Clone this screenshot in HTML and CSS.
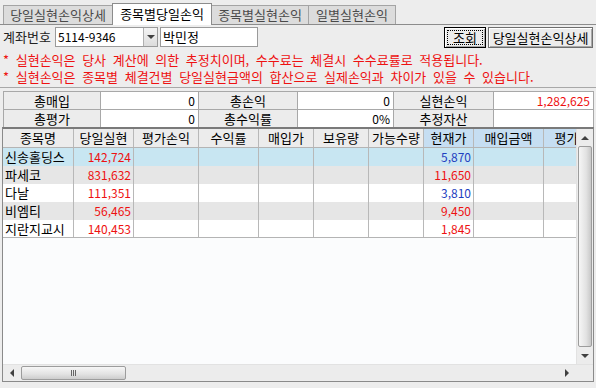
FILE: index.html
```html
<!DOCTYPE html>
<html lang="ko">
<head>
    <meta charset="UTF-8">
    <meta name="viewport" content="width=device-width, initial-scale=1.0">
    <title>종목별당일손익</title>
    <link rel="stylesheet" href="styles.css">
</head>
<body>
    <div class="tabs">
        <div class="tab tab-1">당일실현손익상세</div>
        <div class="tab tab-2 active">종목별당일손익</div>
        <div class="tab tab-3">종목별실현손익</div>
        <div class="tab tab-4">일별실현손익</div>
    </div>

    <div class="toolbar">
        <span class="label">계좌번호</span>
        <div class="combo">
            <span class="combo-text">5114-9346</span>
            <span class="combo-btn"><i class="arrow-down"></i></span>
        </div>
        <div class="field">박민정</div>
        <div class="buttons">
            <button class="btn btn-query focus">조회</button>
            <button class="btn btn-detail">당일실현손익상세</button>
        </div>
    </div>

    <div class="notes">
        <p>* 실현손익은 당사 계산에 의한 추정치이며, 수수료는 체결시 수수료률로 적용됩니다.</p>
        <p>* 실현손익은 종목별 체결건별 당일실현금액의 합산으로 실제손익과 차이가 있을 수 있습니다.</p>
    </div>

    <div class="divider"></div>

    <div class="summary">
        <div class="s-label">총매입</div>
        <div class="s-value">0</div>
        <div class="s-label">총손익</div>
        <div class="s-value">0</div>
        <div class="s-label">실현손익</div>
        <div class="s-value red">1,282,625</div>
        <div class="s-label">총평가</div>
        <div class="s-value">0</div>
        <div class="s-label">총수익률</div>
        <div class="s-value">0%</div>
        <div class="s-label">추정자산</div>
        <div class="s-value"></div>
    </div>

    <div class="grid">
        <div class="grid-main">
            <div class="grid-view">
                <div class="row head">
                    <div class="c c1">종목명</div>
                    <div class="c c2">당일실현</div>
                    <div class="c c3">평가손익</div>
                    <div class="c c4">수익률</div>
                    <div class="c c5">매입가</div>
                    <div class="c c6">보유량</div>
                    <div class="c c7">가능수량</div>
                    <div class="c c8 blue-head">현재가</div>
                    <div class="c c9 blue-head">매입금액</div>
                    <div class="c c10 blue-head">평가금액</div>
                </div>
                <div class="row selected">
                    <div class="c c1 name">신송홀딩스</div>
                    <div class="c c2 num red">142,724</div>
                    <div class="c c3"></div><div class="c c4"></div><div class="c c5"></div>
                    <div class="c c6"></div><div class="c c7"></div>
                    <div class="c c8 num blue">5,870</div>
                    <div class="c c9"></div><div class="c c10"></div>
                </div>
                <div class="row alt">
                    <div class="c c1 name">파세코</div>
                    <div class="c c2 num red">831,632</div>
                    <div class="c c3"></div><div class="c c4"></div><div class="c c5"></div>
                    <div class="c c6"></div><div class="c c7"></div>
                    <div class="c c8 num red">11,650</div>
                    <div class="c c9"></div><div class="c c10"></div>
                </div>
                <div class="row">
                    <div class="c c1 name">다날</div>
                    <div class="c c2 num red">111,351</div>
                    <div class="c c3"></div><div class="c c4"></div><div class="c c5"></div>
                    <div class="c c6"></div><div class="c c7"></div>
                    <div class="c c8 num blue">3,810</div>
                    <div class="c c9"></div><div class="c c10"></div>
                </div>
                <div class="row alt">
                    <div class="c c1 name">비엠티</div>
                    <div class="c c2 num red">56,465</div>
                    <div class="c c3"></div><div class="c c4"></div><div class="c c5"></div>
                    <div class="c c6"></div><div class="c c7"></div>
                    <div class="c c8 num red">9,450</div>
                    <div class="c c9"></div><div class="c c10"></div>
                </div>
                <div class="row last">
                    <div class="c c1 name">지란지교시</div>
                    <div class="c c2 num red">140,453</div>
                    <div class="c c3"></div><div class="c c4"></div><div class="c c5"></div>
                    <div class="c c6"></div><div class="c c7"></div>
                    <div class="c c8 num red">1,845</div>
                    <div class="c c9"></div><div class="c c10"></div>
                </div>
            </div>
            <div class="vscroll">
                <div class="sb-btn"><i class="arrow-up"></i></div>
                <div class="v-thumb"></div>
                <div class="sb-btn"><i class="arrow-down"></i></div>
            </div>
        </div>
        <div class="hscroll">
            <div class="h-track">
                <div class="sb-btn-h"><i class="arrow-left"></i></div>
                <div class="h-thumb"><span class="grip"></span></div>
                <div class="h-space"></div>
                <div class="sb-btn-h"><i class="arrow-right"></i></div>
            </div>
            <div class="corner"></div>
        </div>
    </div>
</body>
</html>
```

FILE: styles.css
```css
/* styles.css */
body {
    margin: 0;
    width: 596px;
    height: 388px;
    overflow: hidden;
    background-color: #ededed;
    color: #000;
    font-family: "Noto Sans CJK KR", sans-serif;
    font-size: 13px;
}

p {
    margin: 0;
}

/* tabs */
.tabs {
    display: flex;
    align-items: flex-end;
    height: 24px;
    padding-left: 3px;
    border-bottom: 1px solid #8c8c8c;
}

.tab {
    box-sizing: border-box;
    height: 19px;
    line-height: 17px;
    text-align: center;
    border: 1px solid #a4a4a4;
    border-bottom: none;
    background-color: #dcdcdc;
    color: #4a4a4a;
    margin-left: -1px;
}

.tab-1 { width: 110px; margin-left: 0; }
.tab-2 { width: 100px; }
.tab-3 { width: 98px; }
.tab-4 { width: 88px; }

.tab.active {
    height: 22px;
    line-height: 20px;
    margin-bottom: -1px;
    background-color: #fff;
    border-color: #8c8c8c;
    color: #000;
    position: relative;
}

/* toolbar */
.toolbar {
    display: flex;
    align-items: center;
    height: 20px;
    margin-top: 2px;
    padding: 0 3px;
}

.label {
    width: 52px;
    line-height: 20px;
    color: #222;
}

.combo {
    display: flex;
    box-sizing: border-box;
    width: 103px;
    height: 20px;
    border: 1px solid #9a9a9a;
    background-color: #fff;
}

.combo-text {
    flex: 1;
    padding-left: 2px;
    font-size: 12px;
    line-height: 18px;
}

.combo-btn {
    display: flex;
    align-items: center;
    justify-content: center;
    width: 13px;
    background: linear-gradient(#f4f4f4, #dcdcdc);
    border-left: 1px solid #b0b0b0;
}

.field {
    box-sizing: border-box;
    width: 98px;
    height: 20px;
    margin-left: 2px;
    padding-left: 2px;
    line-height: 18px;
    border: 1px solid #9a9a9a;
    background-color: #fff;
}

.buttons {
    display: flex;
    gap: 2px;
    margin-left: auto;
}

.btn {
    box-sizing: border-box;
    height: 21px;
    padding: 0;
    font-family: inherit;
    font-size: 13px;
    line-height: 17px;
    color: #000;
    background-color: #ececec;
    border: 1px solid #6e6e6e;
    box-shadow: inset 1px 1px #fff, inset -1px -1px #a8a8a8;
}

.btn-query {
    width: 42px;
}

.btn-detail {
    width: 105px;
}

.btn.focus {
    border-color: #000;
    outline: 1px dotted #000;
    outline-offset: -4px;
}

/* notes */
.notes {
    margin-top: 4px;
    padding-left: 3px;
    color: #ee1111;
    line-height: 17px;
    word-spacing: 3px;
}

.divider {
    margin-top: 2px;
    border-top: 1px solid #a8a8a8;
}

/* summary */
.summary {
    display: grid;
    grid-template-columns: 96px 97px 98px 95px 99px 99px;
    grid-auto-rows: 17px;
    gap: 1px;
    width: 591px;
    box-sizing: border-box;
    margin: 3px 0 0 3px;
    padding: 1px 1px 0 1px;
    background-color: #a8a8a8;
}

.s-label {
    background-color: #ececec;
    text-align: center;
    line-height: 17px;
}

.s-value {
    background-color: #fff;
    text-align: right;
    padding-right: 3px;
    font-size: 12px;
    line-height: 17px;
}

.red {
    color: #ee1111;
}

.blue {
    color: #1e40c0;
}

/* grid */
.grid {
    width: 592px;
    height: 255px;
    box-sizing: border-box;
    margin-left: 2px;
    border: 1px solid #8a8a8a;
    border-top: 2px solid #7a7a7a;
    display: flex;
    flex-direction: column;
    background-color: #fbfcfd;
}

.grid-main {
    display: flex;
    flex: 1;
    min-height: 0;
}

.grid-view {
    flex: 1;
    overflow: hidden;
}

.row {
    display: flex;
    height: 18px;
    width: 611px;
    background-color: #fff;
}

.row.head {
    background-color: #ececec;
    border-bottom: 1px solid #b4b4b4;
}

.row.selected {
    background-color: #c8e6f2;
}

.row.alt {
    background-color: #e6e6e6;
}

.row.last {
    height: 17px;
    border-bottom: 1px solid #b4b4b4;
}

.c {
    box-sizing: border-box;
    flex: none;
    border-right: 1px solid #b8b8b8;
    line-height: 18px;
    white-space: nowrap;
    overflow: hidden;
}

.head .c {
    text-align: center;
}

.c.blue-head {
    background-color: #c6def2;
}

.c.name {
    padding-left: 2px;
}

.c.num {
    text-align: right;
    padding-right: 2px;
    font-size: 12px;
}

.c1 { width: 71px; }
.c2 { width: 60px; }
.c3 { width: 65px; }
.c4 { width: 60px; }
.c5 { width: 55px; }
.c6 { width: 55px; }
.c7 { width: 55px; }
.c8 { width: 50px; }
.c9 { width: 70px; }
.c10 { width: 70px; }

/* scrollbars */
.vscroll {
    display: flex;
    flex-direction: column;
    width: 17px;
    background-color: #ececec;
    border-left: 1px solid #e2e2e2;
    box-sizing: border-box;
}

.sb-btn {
    display: flex;
    align-items: center;
    justify-content: center;
    height: 17px;
}

.v-thumb {
    flex: 1;
    margin: 0 1px 0 1px;
    border: 1px solid #9c9c9c;
    border-radius: 2px;
    background: linear-gradient(90deg, #f6f6f6, #e2e2e2 60%, #c8c8c8);
}

.hscroll {
    display: flex;
    height: 16px;
    background-color: #ececec;
    border-top: 1px solid #e2e2e2;
}

.h-track {
    display: flex;
    flex: 1;
}

.sb-btn-h {
    display: flex;
    align-items: center;
    justify-content: center;
    width: 18px;
}

.h-thumb {
    display: flex;
    align-items: center;
    justify-content: center;
    width: 105px;
    margin: 1px 0;
    box-sizing: border-box;
    border: 1px solid #9c9c9c;
    border-radius: 2px;
    background: linear-gradient(#f6f6f6, #e2e2e2 60%, #cccccc);
}

.grip {
    width: 1px;
    height: 6px;
    background-color: #666;
    box-shadow: 2px 0 #666, 4px 0 #666;
    margin-right: 4px;
}

.h-space {
    flex: 1;
}

.corner {
    width: 17px;
    background-color: #ececec;
}

.arrow-up,
.arrow-down,
.arrow-left,
.arrow-right {
    width: 0;
    height: 0;
}

.arrow-up {
    border-left: 4px solid transparent;
    border-right: 4px solid transparent;
    border-bottom: 4px solid #404040;
}

.arrow-down {
    border-left: 4px solid transparent;
    border-right: 4px solid transparent;
    border-top: 4px solid #404040;
}

.arrow-left {
    border-top: 4px solid transparent;
    border-bottom: 4px solid transparent;
    border-right: 4px solid #404040;
}

.arrow-right {
    border-top: 4px solid transparent;
    border-bottom: 4px solid transparent;
    border-left: 4px solid #404040;
}
```
